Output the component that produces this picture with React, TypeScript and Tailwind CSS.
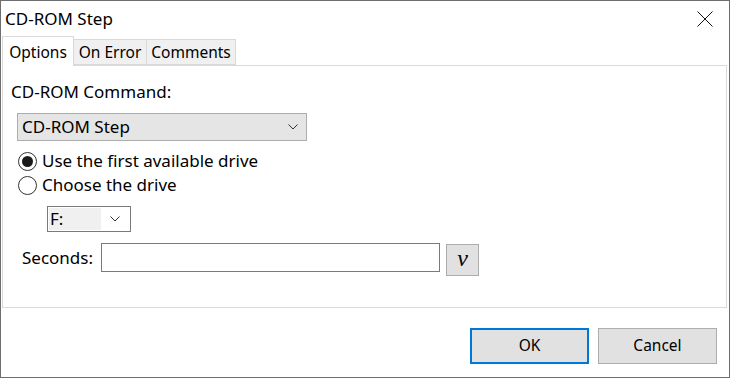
import { useState } from "react";

const font = { fontFamily: '"Noto Sans", "Open Sans", sans-serif' };

function Chevron() {
  return (
    <svg width="10" height="6" viewBox="0 0 10 6" className="shrink-0">
      <path d="M0.5 0.5 L5 5 L9.5 0.5" fill="none" stroke="#333" strokeWidth="1" />
    </svg>
  );
}

function Radio({ checked, label, onClick }: { checked: boolean; label: string; onClick: () => void }) {
  return (
    <button onClick={onClick} className="flex h-[24px] items-center gap-[5px] text-left">
      <span className="flex h-[19px] w-[19px] items-center justify-center rounded-full border border-[#333] bg-white">
        {checked && <span className="h-[11px] w-[11px] rounded-full bg-[#1a1a1a]" />}
      </span>
      <span>{label}</span>
    </button>
  );
}

export default function App() {
  const [firstDrive, setFirstDrive] = useState(true);

  return (
    <div
      className="flex h-[378px] w-[730px] flex-col border border-t-0 border-[#6e6e6e] bg-white text-[17px] text-black"
      style={font}
    >
      {/* title bar */}
      <div className="flex h-[36px] items-center justify-between border-t border-[#6e6e6e] pl-[4px] pr-[16px]">
        <span className="text-[17px]">CD-ROM Step</span>
        <svg width="16" height="16" viewBox="0 0 16 16">
          <path d="M0.5 0.5 L15.5 15.5 M15.5 0.5 L0.5 15.5" stroke="#111" strokeWidth="1" />
        </svg>
      </div>

      {/* tabs */}
      <div className="flex h-[29px] items-end pl-[1px] text-[15.5px]">
        <div className="relative z-10 -mb-px flex h-[30px] w-[72px] items-center justify-center border border-b-0 border-[#d9d9d9] bg-white pt-[2px]">
          Options
        </div>
        <div className="flex h-[26px] w-[73px] items-center justify-center border border-l-0 border-[#d9d9d9] bg-[#f0f0f0] pt-[2px]">
          On Error
        </div>
        <div className="flex h-[26px] w-[89px] items-center justify-center border border-l-0 border-[#d9d9d9] bg-[#f0f0f0] pt-[2px]">
          Comments
        </div>
      </div>

      {/* panel */}
      <div className="ml-[1px] mr-[2px] flex h-[243px] flex-col border border-[#d9d9d9] pl-[8px] pt-[14px]">
        <div className="h-[24px] leading-[24px]">CD-ROM Command:</div>
        <div className="ml-[6px] mt-[9px] flex h-[28px] w-[290px] items-center justify-between border border-[#adadad] bg-[#e5e5e5] pl-[4px] pr-[8px]">
          <span>CD-ROM Step</span>
          <Chevron />
        </div>
        <div className="ml-[7px] mt-[8px] flex flex-col">
          <Radio checked={firstDrive} label="Use the first available drive" onClick={() => setFirstDrive(true)} />
          <Radio checked={!firstDrive} label="Choose the drive" onClick={() => setFirstDrive(false)} />
        </div>
        <div className="ml-[36px] mt-[9px] flex h-[26px] w-[84px] items-center border border-[#7a7a7a] bg-white p-[1px]">
          <span className="flex h-full w-[52px] items-center bg-[#f0f0f0] pl-[1px]">F:</span>
          <span className="flex flex-1 justify-center">
            <Chevron />
          </span>
        </div>
        <div className="ml-[11px] mt-[11px] flex items-start">
          <span className="mt-[3px] w-[79px] leading-[24px]">Seconds:</span>
          <div className="h-[29px] w-[339px] border border-[#7a7a7a] bg-white" />
          <button className="ml-[6px] mt-[1px] flex h-[32px] w-[33px] items-center justify-center border border-[#adadad] bg-[#e1e1e1]">
            <span
              className="text-[24px] italic leading-none"
              style={{ fontFamily: '"Liberation Serif", serif', marginTop: "-4px" }}
            >
              v
            </span>
          </button>
        </div>
      </div>

      {/* buttons */}
      <div className="flex flex-1 items-start justify-end gap-[9px] pr-[12px] pt-[20px] text-[15.5px]">
        <button className="h-[36px] w-[119px] border-2 border-[#0078d7] bg-[#e1e1e1]">OK</button>
        <button className="h-[36px] w-[119px] border border-[#adadad] bg-[#e1e1e1]">Cancel</button>
      </div>
    </div>
  );
}
